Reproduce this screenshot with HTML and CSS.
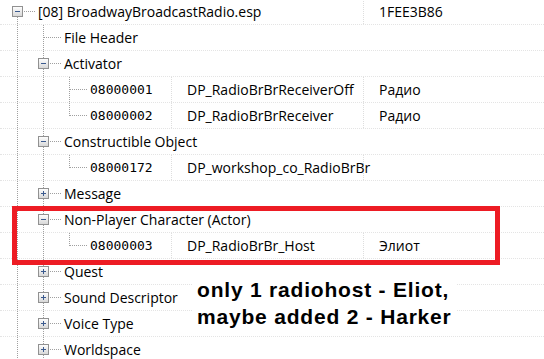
FILE: index.html
```html
<!DOCTYPE html>
<html lang="ru">
<head>
  <meta charset="UTF-8" />
  <title>BroadwayBroadcastRadio.esp</title>

  <!-- Стили -->
  <link rel="stylesheet" href="styles.css">
</head>
<body>

<div class="view">
  <div class="tree">
    <!-- Плагин -->
    <div class="row">
      <div class="cell span2">
        <span class="g box open first"><i></i></span>
        <span class="label">[08] BroadwayBroadcastRadio.esp</span>
      </div>
      <div class="cell val">1FEE3B86</div>
    </div>

    <div class="row">
      <div class="cell">
        <span class="g line"></span>
        <span class="g tee"></span>
        <span class="label">File Header</span>
      </div>
    </div>

    <!-- Activator -->
    <div class="row">
      <div class="cell">
        <span class="g line"></span>
        <span class="g box open"><i></i></span>
        <span class="label">Activator</span>
      </div>
    </div>
    <div class="row">
      <div class="cell id">
        <span class="g line"></span>
        <span class="g line"></span>
        <span class="g tee"></span>
        <span class="label mono">08000001</span>
      </div>
      <div class="cell name">DP_RadioBrBrReceiverOff</div>
      <div class="cell val">Радио</div>
    </div>
    <div class="row">
      <div class="cell id">
        <span class="g line"></span>
        <span class="g line"></span>
        <span class="g end"></span>
        <span class="label mono">08000002</span>
      </div>
      <div class="cell name">DP_RadioBrBrReceiver</div>
      <div class="cell val">Радио</div>
    </div>

    <!-- Constructible Object -->
    <div class="row">
      <div class="cell">
        <span class="g line"></span>
        <span class="g box open"><i></i></span>
        <span class="label">Constructible Object</span>
      </div>
    </div>
    <div class="row">
      <div class="cell id">
        <span class="g line"></span>
        <span class="g line"></span>
        <span class="g end"></span>
        <span class="label mono">08000172</span>
      </div>
      <div class="cell name">DP_workshop_co_RadioBrBr</div>
      <div class="cell val"></div>
    </div>

    <div class="row">
      <div class="cell">
        <span class="g line"></span>
        <span class="g box closed"><i></i></span>
        <span class="label">Message</span>
      </div>
    </div>

    <!-- Non-Player Character -->
    <div class="row">
      <div class="cell">
        <span class="g line"></span>
        <span class="g box open"><i></i></span>
        <span class="label">Non-Player Character (Actor)</span>
      </div>
    </div>
    <div class="row">
      <div class="cell id">
        <span class="g line"></span>
        <span class="g line"></span>
        <span class="g end"></span>
        <span class="label mono">08000003</span>
      </div>
      <div class="cell name">DP_RadioBrBr_Host</div>
      <div class="cell val">Элиот</div>
    </div>

    <div class="row">
      <div class="cell">
        <span class="g line"></span>
        <span class="g box closed"><i></i></span>
        <span class="label">Quest</span>
      </div>
    </div>
    <div class="row">
      <div class="cell">
        <span class="g line"></span>
        <span class="g box closed"><i></i></span>
        <span class="label">Sound Descriptor</span>
      </div>
    </div>
    <div class="row">
      <div class="cell">
        <span class="g line"></span>
        <span class="g box closed"><i></i></span>
        <span class="label">Voice Type</span>
      </div>
    </div>
    <div class="row">
      <div class="cell">
        <span class="g line"></span>
        <span class="g box closed"><i></i></span>
        <span class="label">Worldspace</span>
      </div>
    </div>
  </div>

  <!-- Пометки поверх скриншота -->
  <div class="mark"></div>
  <div class="note">only 1 radiohost - Eliot,<br>maybe added 2 - Harker</div>
</div>

</body>
</html>
```

FILE: styles.css
```css
/* Общие стили */
body {
  margin: 0;
  background: #fff;
  font-family: "Open Sans", "Noto Sans", sans-serif;
  font-size: 14px;
  color: #000;
  overflow: hidden;
}

.view {
  position: relative;
  width: 544px;
  height: 359px;
  overflow: hidden;
}

.tree {
  margin-top: -1px;
}

/* Строка дерева */
.row {
  display: flex;
  height: 26px;
  box-sizing: border-box;
  border-bottom: 1px dotted #e4e4e4;
}

.cell {
  display: flex;
  align-items: center;
  height: 100%;
  white-space: nowrap;
  box-sizing: border-box;
}

.row > .cell:first-child {
  padding-left: 4px;
}

.cell.span2 {
  width: 364px;
  border-right: 1px dotted #dedede;
}

.cell.id {
  width: 172px;
  border-right: 1px dotted #dedede;
}

.cell.name {
  width: 192px;
  padding-left: 15px;
  border-right: 1px dotted #dedede;
}

.cell.val {
  flex: 1;
  padding-left: 15px;
}

.label {
  margin-left: 8px;
}

.mono {
  font-family: "DejaVu Sans Mono", monospace;
  font-size: 13px;
}

/* Линии дерева */
.g {
  position: relative;
  flex: none;
  width: 26px;
  height: 100%;
}

.g::before {
  content: '';
  position: absolute;
  left: 13px;
  top: 0;
  bottom: 0;
  border-left: 1px dotted #a0a0a0;
}

.g.end::before {
  bottom: 50%;
}

.g.first::before {
  top: 50%;
}

.g.tee::after,
.g.end::after,
.g.box::after {
  content: '';
  position: absolute;
  left: 13px;
  top: 12px;
  width: 18px;
  border-top: 1px dotted #a0a0a0;
}

/* Кнопка раскрытия */
.g.box i {
  position: absolute;
  z-index: 1;
  left: 8px;
  top: 7px;
  width: 9px;
  height: 9px;
  border: 1px solid #919191;
  background: linear-gradient(#fdfdfd, #d8d8d8);
}

.g.box i::before,
.g.closed i::after {
  content: '';
  position: absolute;
  background: #3b5a8e;
}

.g.box i::before {
  left: 2px;
  top: 4px;
  width: 5px;
  height: 1px;
}

.g.closed i::after {
  left: 4px;
  top: 2px;
  width: 1px;
  height: 5px;
}

/* Красная рамка */
.mark {
  position: absolute;
  left: 12px;
  top: 206px;
  width: 488px;
  height: 59px;
  box-sizing: border-box;
  border: 5px solid #ed1c24;
}

/* Подпись */
.note {
  position: absolute;
  left: 193px;
  top: 273px;
  padding: 3px 4px;
  background: #fff;
  font-family: "Liberation Sans", Arial, sans-serif;
  font-weight: bold;
  font-size: 21px;
  line-height: 27px;
  letter-spacing: 0.8px;
}
```
